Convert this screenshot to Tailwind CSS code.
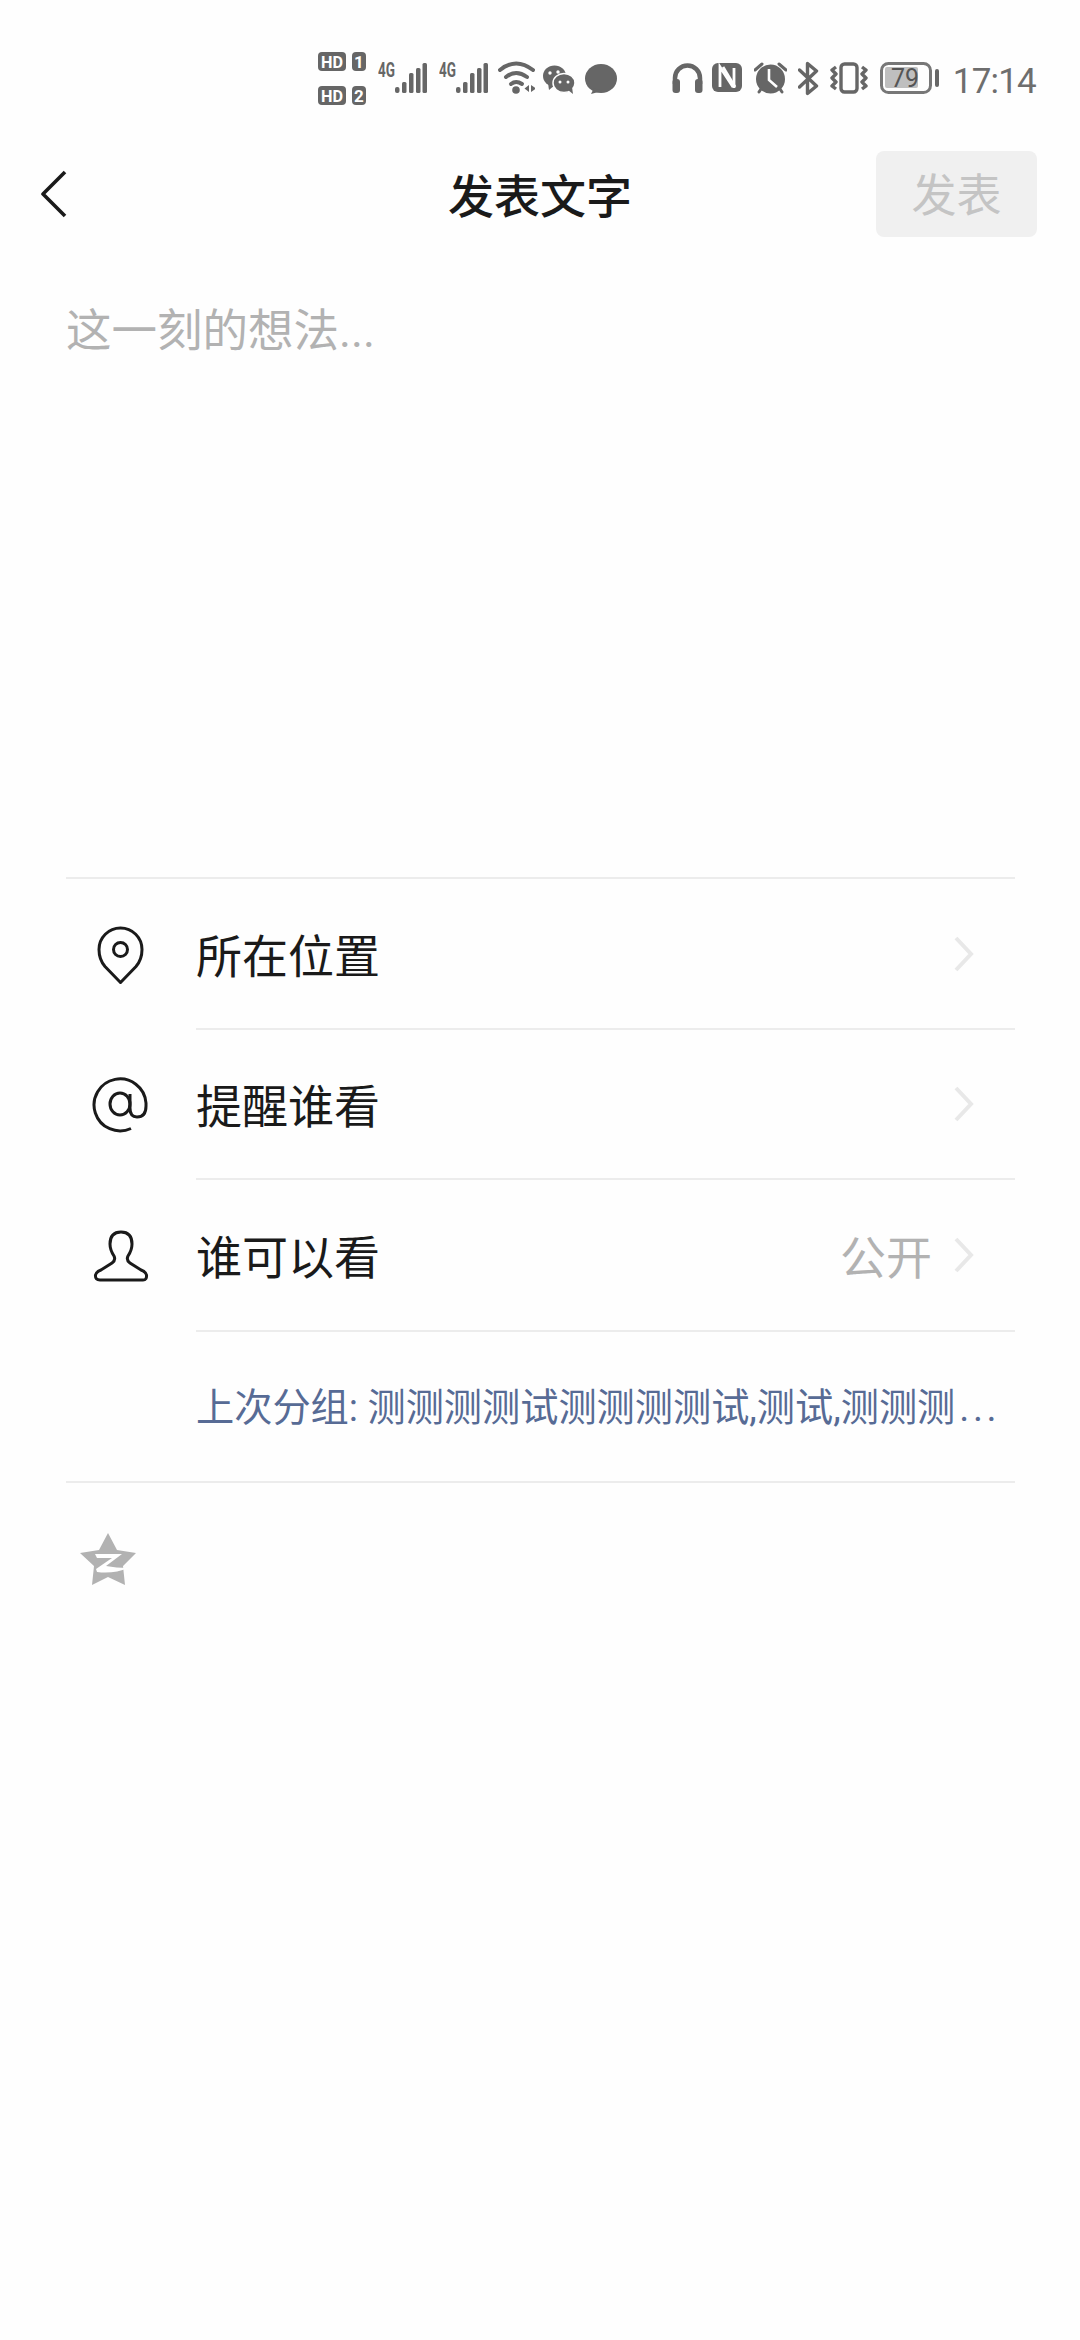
<!DOCTYPE html>
<html lang="zh-CN">
<head>
    <meta charset="UTF-8">
    <meta name="viewport" content="width=device-width, initial-scale=1.0">
    <title>发表文字</title>
    <script src="https://cdn.jsdelivr.net/npm/@tailwindcss/browser@4"></script>
</head>
<body class="bg-[#fefefe] font-['Roboto','Noto_Sans_CJK_SC',sans-serif]">
    <div class="w-[1080px] h-[2340px] overflow-hidden">

        <!-- Status bar -->
        <div class="h-[151px] pt-[52px] pr-[44px] flex justify-end items-start text-[#666]">
            <svg class="w-[48px] h-[53px]" viewBox="318 52 48 53">
                <rect x="318" y="52" width="28" height="19" rx="4" fill="#666"/>
                <rect x="352" y="52" width="14" height="19" rx="4" fill="#666"/>
                <rect x="318" y="86" width="28" height="19" rx="4" fill="#666"/>
                <rect x="352" y="86" width="14" height="19" rx="4" fill="#666"/>
                <text x="332" y="67.500" text-anchor="middle" font-size="17" font-weight="700" fill="#fff" font-family="Roboto" textLength="22" lengthAdjust="spacingAndGlyphs">HD</text>
                <text x="359" y="67.500" text-anchor="middle" font-size="17" font-weight="700" fill="#fff" font-family="Roboto">1</text>
                <text x="332" y="101.500" text-anchor="middle" font-size="17" font-weight="700" fill="#fff" font-family="Roboto" textLength="22" lengthAdjust="spacingAndGlyphs">HD</text>
                <text x="359" y="101.500" text-anchor="middle" font-size="17" font-weight="700" fill="#fff" font-family="Roboto">2</text>
            </svg>
            <svg class="ml-[12px] w-[49px] h-[53px]" viewBox="0 0 49 53" fill="#666">
                <text x="0" y="24.500" font-size="19.500" font-weight="700" font-family="Roboto" textLength="17" lengthAdjust="spacingAndGlyphs">4G</text>
                <rect x="17" y="35" width="4.500" height="6" rx="2"/>
                <rect x="24" y="30" width="4.500" height="11" rx="1.500"/>
                <rect x="31" y="21" width="4.500" height="20" rx="1.500"/>
                <rect x="38" y="16" width="4.500" height="25" rx="1.500"/>
                <rect x="44.500" y="11" width="4.500" height="30" rx="1.500"/>
            </svg>
            <svg class="ml-[12px] w-[49px] h-[53px]" viewBox="0 0 49 53" fill="#666">
                <text x="0" y="24.500" font-size="19.500" font-weight="700" font-family="Roboto" textLength="17" lengthAdjust="spacingAndGlyphs">4G</text>
                <rect x="17" y="35" width="4.500" height="6" rx="2"/>
                <rect x="24" y="30" width="4.500" height="11" rx="1.500"/>
                <rect x="31" y="21" width="4.500" height="20" rx="1.500"/>
                <rect x="38" y="16" width="4.500" height="25" rx="1.500"/>
                <rect x="44.500" y="11" width="4.500" height="30" rx="1.500"/>
            </svg>
            <!-- wifi -->
            <svg class="ml-[10px] w-[37px] h-[53px]" viewBox="498 52 37 53" fill="none" stroke="#666" stroke-width="4" stroke-linecap="round">
                <path d="M500 70 Q516 57 533 70"/>
                <path d="M506 77 Q516 69 527 77"/>
                <path d="M511 84 Q516 80 522 84"/>
                <circle cx="516" cy="90" r="3.800" fill="#666" stroke="none"/>
                <path d="M529 85 V92 L524.500 88.500 Z M531 85 V92 L536 88.500 Z" fill="#666" stroke="none"/>
            </svg>
            <!-- wechat -->
            <svg class="ml-[8px] w-[32px] h-[53px]" viewBox="543 52 32 53" fill="#666">
                <ellipse cx="554.500" cy="76" rx="11.500" ry="10.500"/>
                <path d="M548 83 L549 90 L555 85 Z"/>
                <ellipse cx="564" cy="83" rx="11" ry="9.500" stroke="#fff" stroke-width="1.500"/>
                <path d="M568 90 L573 94 L572 87 Z"/>
                <circle cx="550" cy="73" r="1.700" fill="#fff"/>
                <circle cx="558" cy="72" r="1.700" fill="#fff"/>
                <circle cx="560" cy="82" r="1.500" fill="#fff"/>
                <circle cx="568" cy="82" r="1.500" fill="#fff"/>
            </svg>
            <!-- message -->
            <svg class="ml-[10px] w-[32px] h-[53px]" viewBox="585 52 32 53" fill="#666">
                <ellipse cx="601" cy="78.500" rx="16" ry="14.500"/>
                <path d="M594 88 L591 94 L602 91 Z"/>
            </svg>
            <!-- headphones -->
            <svg class="ml-[55px] w-[31px] h-[53px]" viewBox="672 52 31 53" fill="#666">
                <path d="M675 84 V78 A12.500 12.500 0 0 1 700 78 V84" fill="none" stroke="#666" stroke-width="4.500"/>
                <rect x="672.500" y="79" width="7.500" height="14" rx="3"/>
                <rect x="695" y="79" width="7.500" height="14" rx="3"/>
            </svg>
            <!-- nfc -->
            <svg class="ml-[9px] w-[30px] h-[53px]" viewBox="712 52 30 53">
                <rect x="712" y="63" width="30" height="29" rx="6" fill="#666"/>
                <path d="M720 87 V67 L733 87 M734 68 V88" fill="none" stroke="#fff" stroke-width="2.800"/>
                <path d="M723 67 L735 87" fill="none" stroke="#fff" stroke-width="2.800"/>
            </svg>
            <!-- alarm -->
            <svg class="ml-[12px] w-[33px] h-[53px]" viewBox="754 52 33 53" fill="#666">
                <circle cx="770.500" cy="79" r="14.500"/>
                <path d="M755 70 L762 64 M779 64 L786 70 M759 92 L761 89 M782 92 L780 89" stroke="#666" stroke-width="3" stroke-linecap="round"/>
                <path d="M769 69 V80 L777 87" fill="none" stroke="#fff" stroke-width="2.600"/>
            </svg>
            <!-- bluetooth -->
            <svg class="ml-[11px] w-[22px] h-[53px]" viewBox="798 52 22 53" fill="none" stroke="#666" stroke-width="3.400" stroke-linejoin="round" stroke-linecap="round">
                <path d="M799.500 70 L816.500 86 L807.500 93.500 V63.500 L816.500 71 L799.500 87"/>
            </svg>
            <!-- vibrate -->
            <svg class="ml-[10px] w-[38px] h-[53px]" viewBox="830 52 38 53" fill="none" stroke="#666" stroke-width="3.400" stroke-linejoin="round">
                <rect x="841" y="64" width="16" height="28" rx="3.500"/>
                <path d="M836 67 L832 70 L836 74 L832 78 L836 82 L832 86 L836 89"/>
                <path d="M862 67 L866 70 L862 74 L866 78 L862 82 L866 86 L862 89"/>
            </svg>
            <!-- battery -->
            <svg class="ml-[12px] w-[59px] h-[53px]" viewBox="880 52 59 53">
                <rect x="881.500" y="63.500" width="49" height="29" rx="7" fill="none" stroke="#777" stroke-width="3"/>
                <rect x="885" y="67" width="33" height="21" rx="2" fill="#bfbfbf"/>
                <rect x="935" y="69" width="4" height="18" rx="2" fill="#666"/>
                <text x="905" y="87" text-anchor="middle" font-size="25" font-family="Roboto" fill="#555">79</text>
            </svg>
            <span class="ml-[14px] mt-[10px] text-[35px] leading-[40px] text-[#6e6e6e] tracking-[-0.8px]">17:14</span>
        </div>

        <!-- Header -->
        <div class="h-[86px] pl-[41px] pr-[43px] grid grid-cols-[1fr_auto_1fr] items-center">
            <svg class="w-[26px] h-[48px]" viewBox="0 0 26 48" fill="none" stroke="#1a1a1a" stroke-width="3.600" stroke-linejoin="round">
                <path d="M24 2 L2 24 L24 46"/>
            </svg>
            <h1 class="ml-[2px] pt-[5px] text-[46px] leading-[60px] font-medium text-[#1a1a1a]">发表文字</h1>
            <button class="justify-self-end w-[161px] h-[86px] pt-[6px] rounded-[8px] bg-[#f0f0f0] text-[45px] text-[#c4c4c4]">发表</button>
        </div>

        <!-- Text input placeholder -->
        <div class="h-[640px] pl-[66px] pt-[65px] text-[45.500px] leading-[60px] text-[#b2b2b2]">这一刻的想法...</div>

        <!-- Options -->
        <div class="ml-[66px] mr-[65px] border-y-2 border-[#ececec]">
            <div class="flex items-center h-[149px]">
                <div class="w-[108px] mr-[22px] flex justify-center">
                    <svg class="w-[60px] h-[60px]" viewBox="90 923.500 60 60" fill="none" stroke="#1a1a1a" stroke-width="3">
                        <path d="M120.500 982 L105 966 Q99 959 99 949 A21.500 21.500 0 0 1 142 949 Q142 959 136 966 Z"/>
                        <circle cx="120.500" cy="949" r="7"/>
                    </svg>
                </div>
                <span class="flex-1 pt-[7px] text-[46px] text-[#1a1a1a]">所在位置</span>
                <svg class="mr-[41px] w-[20px] h-[36px]" viewBox="0 0 20 36" fill="none" stroke="#e8e8e8" stroke-width="4"><path d="M2 2 L17 18 L2 34"/></svg>
            </div>
            <div class="ml-[130px] border-t-2 border-[#ececec]"></div>
            <div class="flex items-center h-[148px]">
                <div class="w-[108px] mr-[22px] flex justify-center">
                    <svg class="w-[60px] h-[60px]" viewBox="89 1074 60 60" fill="none" stroke="#1a1a1a" stroke-width="3">
                        <path d="M130 1128.500 A26 26 0 1 1 145 1103 V1106 Q145 1117 136 1117 Q129 1117 129 1108 V1094"/>
                        <ellipse cx="119" cy="1104" rx="10" ry="11"/>
                    </svg>
                </div>
                <span class="flex-1 pt-[7px] text-[46px] text-[#1a1a1a]">提醒谁看</span>
                <svg class="mr-[41px] w-[20px] h-[36px]" viewBox="0 0 20 36" fill="none" stroke="#e8e8e8" stroke-width="4"><path d="M2 2 L17 18 L2 34"/></svg>
            </div>
            <div class="ml-[130px] border-t-2 border-[#ececec]"></div>
            <div class="flex items-center h-[150px]">
                <div class="w-[108px] mr-[22px] flex justify-center">
                    <svg class="w-[60px] h-[60px]" viewBox="90 1225 60 60" fill="none" stroke="#1a1a1a" stroke-width="3">
                        <path d="M100 1280 H143 Q147 1280 146.500 1275 Q146 1272 141 1270 L130 1263 Q126 1260 128 1256 Q132 1250 132 1244 Q132 1232 121 1232 Q110 1232 110 1244 Q110 1250 114 1256 Q116 1260 112 1263 L101 1270 Q96 1272 95.500 1275 Q95 1280 100 1280 Z"/>
                    </svg>
                </div>
                <span class="flex-1 pt-[7px] text-[46px] text-[#1a1a1a]">谁可以看</span>
                <span class="mr-[22px] pt-[7px] text-[46px] text-[#b2b2b2]">公开</span>
                <svg class="mr-[41px] w-[20px] h-[36px]" viewBox="0 0 20 36" fill="none" stroke="#e8e8e8" stroke-width="4"><path d="M2 2 L17 18 L2 34"/></svg>
            </div>
            <div class="ml-[130px] border-t-2 border-[#ececec]"></div>
            <div class="h-[149px] pl-[130px] pt-[4px] flex items-center text-[38.200px] text-[#576b95] whitespace-nowrap">上次分组: 测测测测试测测测测试,测试,测测测<span class="ml-[4px] tracking-[3.500px]">...</span></div>
        </div>

        <!-- QQ zone -->
        <div class="pl-[80px] pt-[50px]">
            <svg class="w-[56px] h-[53px]" viewBox="0 0 56 53">
                <path d="M28 0 L37 17 L56 20 L43 33 L45 52 L28 44 L12 52 L14 33 L0 20 L19 17 Z" fill="#b2b2b2"/>
                <path d="M15 21 H42 L26 33 Q36 35 48 35 Q34 41 17 39 L16 36 L32 25 H17 Z" fill="#fff"/>
            </svg>
        </div>
    </div>
</body>
</html>
